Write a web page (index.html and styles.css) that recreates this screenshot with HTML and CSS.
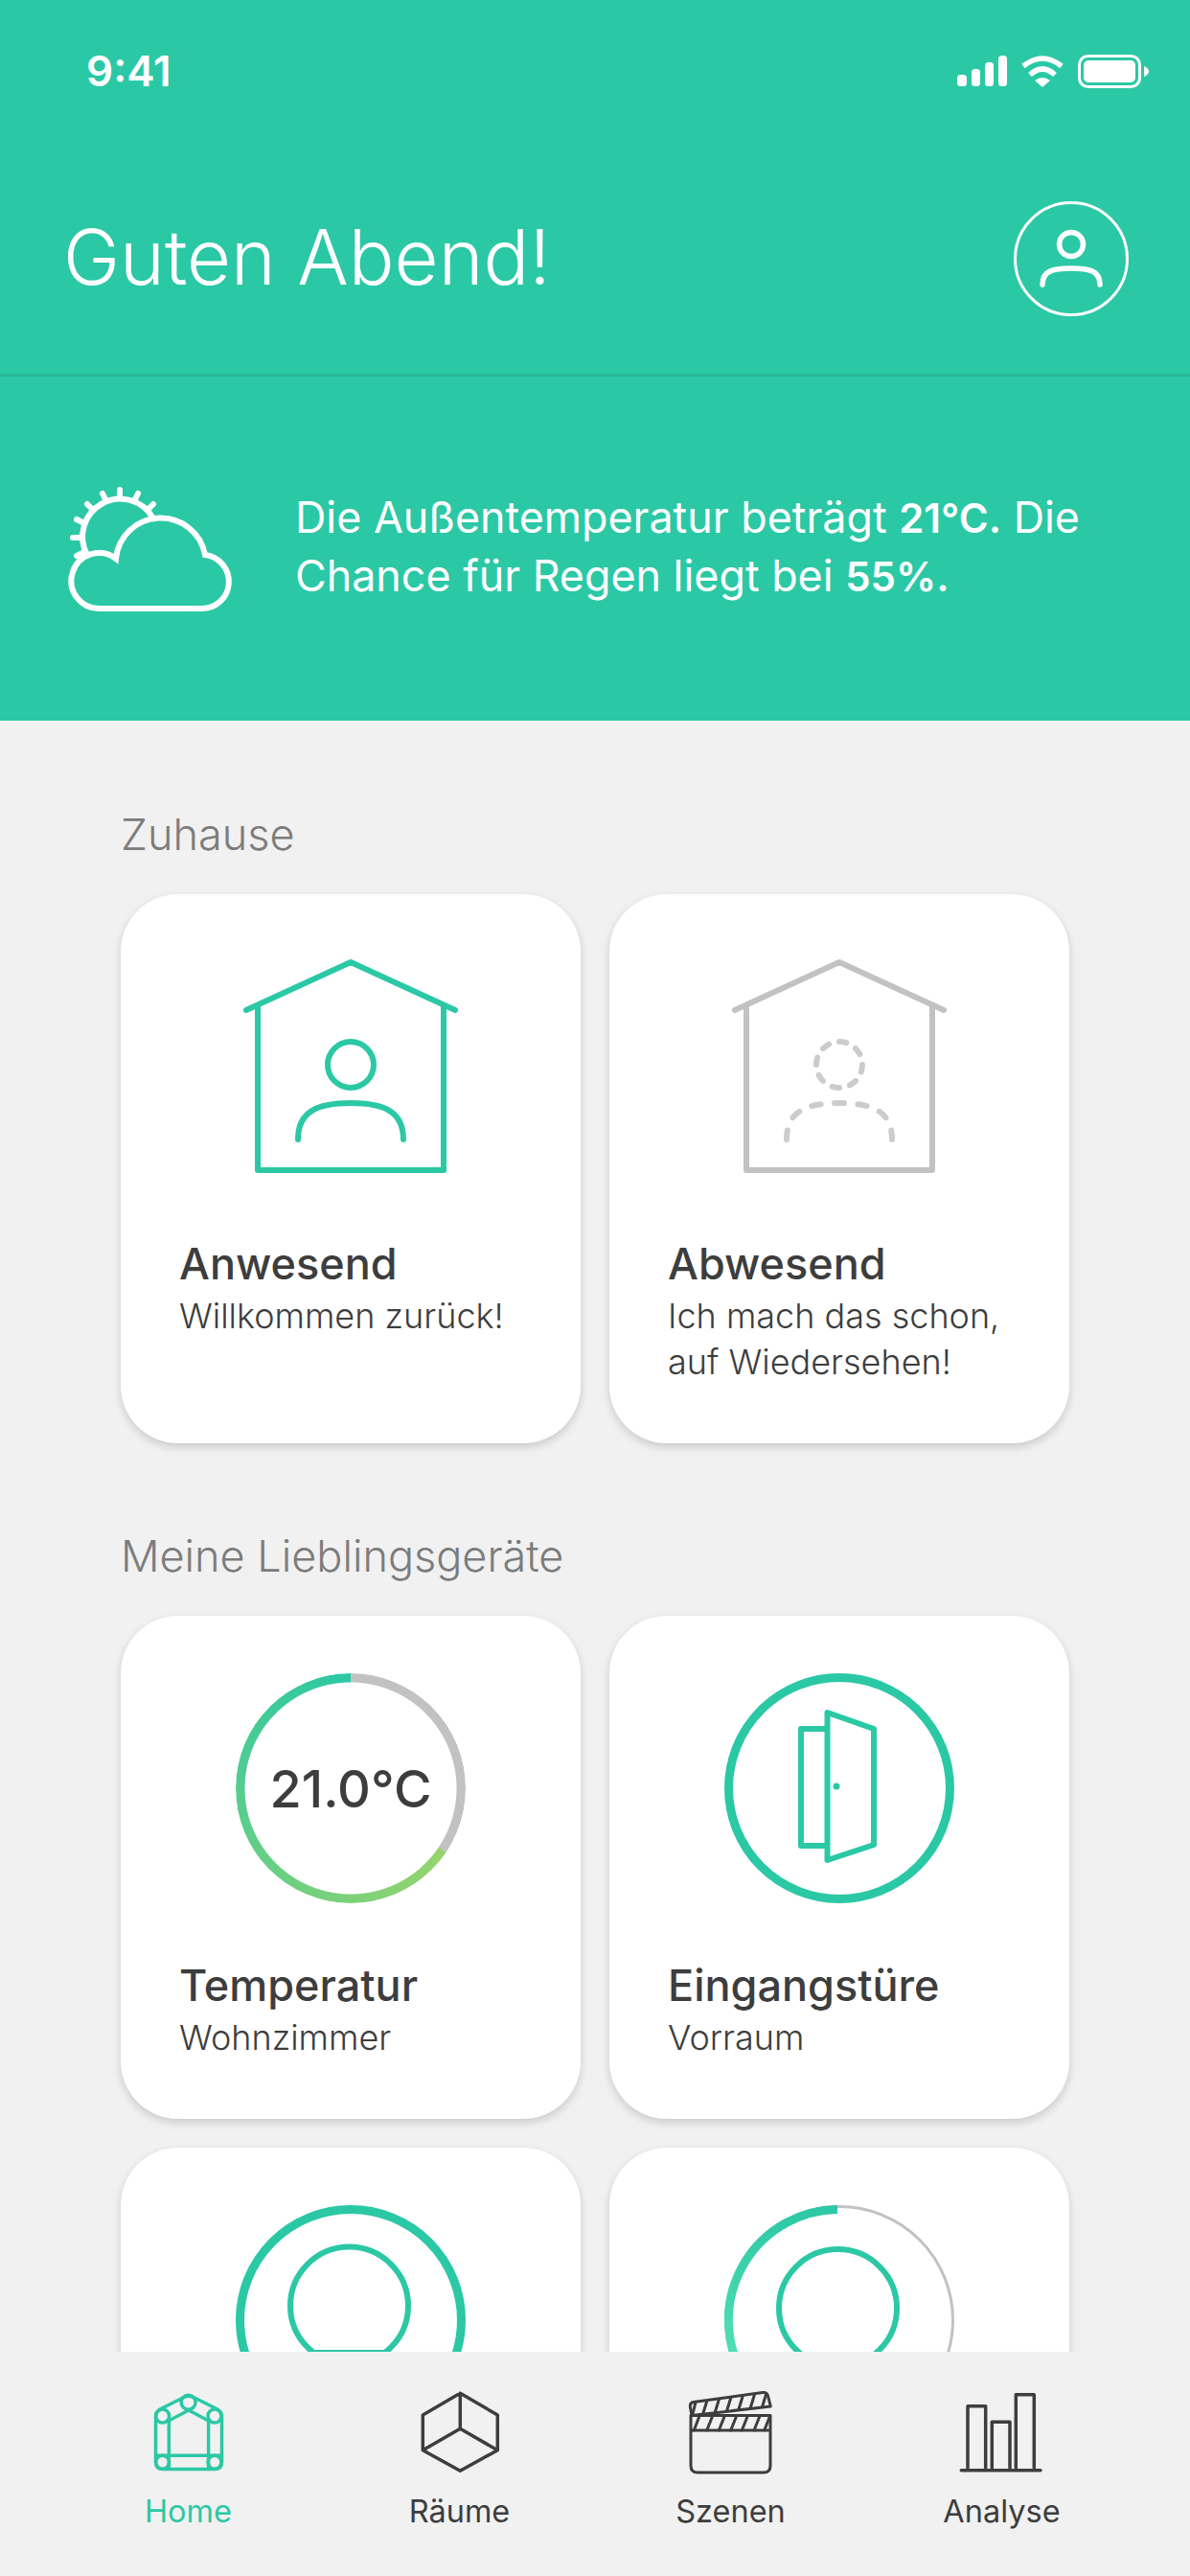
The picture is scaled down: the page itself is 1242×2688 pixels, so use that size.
FILE: index.html
```html
<!DOCTYPE html>
<html lang="de">
<head>
    <meta charset="utf-8">
    <title>Guten Abend</title>
    <link rel="stylesheet" href="styles.css">
</head>
<body>
<div class="phone">
    <header class="header">
        <div class="status">
            <span class="time">9:41</span>
            <div class="status-icons">
                <svg class="signal" width="52" height="32" viewBox="0 0 52 32">
                    <rect x="0" y="20" width="10" height="12" rx="3.5"/>
                    <rect x="15" y="14" width="9" height="18" rx="3.5"/>
                    <rect x="29" y="7" width="9" height="25" rx="3.5"/>
                    <rect x="43" y="0" width="9" height="32" rx="3.5"/>
                </svg>
                <svg class="wifi" width="46" height="33" viewBox="0 0 46 33">
                    <path class="wifi-arc" d="M3 11Q23 -5 43 11"/>
                    <path class="wifi-arc" d="M10 20Q23 8 36 20"/>
                    <path d="M23 33L15 26Q23 20 31 26Z"/>
                </svg>
                <svg class="battery" width="74" height="35" viewBox="0 0 74 35">
                    <rect class="battery-shell" x="1.5" y="1.5" width="63" height="32" rx="9"/>
                    <rect x="6" y="6" width="54" height="23" rx="5"/>
                    <path d="M69 12C72 13 74 15 74 17.500C74 20 72 22 69 23Z"/>
                </svg>
            </div>
        </div>
        <div class="greeting">
            <h1>Guten Abend!</h1>
            <svg class="avatar" width="120" height="120" viewBox="0 0 120 120">
                <circle class="avatar-ring" cx="60" cy="60" r="58.500"/>
                <circle cx="60" cy="45" r="12.500"/>
                <path d="M30 87C30 72 42 70 60 70C78 70 90 72 90 87"/>
            </svg>
        </div>
        <div class="weather">
            <svg class="weather-icon" width="220" height="180" viewBox="0 0 220 180">
                <path d="M55 154H160A28.100 28.100 0 0 0 164 98A47 47 0 0 0 71 102A29 29 0 1 0 55 154Z"/>
                <path d="M41 98A39 39 0 0 1 110 60"/>
                <path d="M75 30V37M57 34L60 40M94 34L91 40M41 45L46 50M110 45L105 50M30 61L36 64M26 80H33M30 99L36 96"/>
            </svg>
            <p>Die Außentemperatur beträgt <b>21°C.</b> Die<br>Chance für Regen liegt bei <b>55%.</b></p>
        </div>
    </header>

    <main class="content">
        <h2>Zuhause</h2>
        <div class="cards">
            <div class="card">
                <svg class="icon house" width="240" height="240" viewBox="0 0 240 240">
                    <path d="M11 61L120 11L229 61M23 56V228H217V56"/>
                    <circle cx="120" cy="118" r="24"/>
                    <path d="M65 196C65 167 85 158 120 158C155 158 175 167 175 196"/>
                </svg>
                <h3>Anwesend</h3>
                <p>Willkommen zurück!</p>
            </div>
            <div class="card">
                <svg class="icon house house-off" width="240" height="240" viewBox="0 0 240 240">
                    <path d="M11 61L120 11L229 61M23 56V228H217V56"/>
                    <circle class="dashed" cx="120" cy="118" r="24" pathLength="160" stroke-dasharray="8 12"/>
                    <path class="dashed" d="M65 196C65 167 85 158 120 158C155 158 175 167 175 196" pathLength="130" stroke-dasharray="8 12.330"/>
                </svg>
                <h3>Abwesend</h3>
                <p>Ich mach das schon,<br>auf Wiedersehen!</p>
            </div>
        </div>

        <h2>Meine Lieblingsgeräte</h2>
        <div class="cards">
            <div class="card">
                <div class="icon gauge">21.0°C</div>
                <h3>Temperatur</h3>
                <p>Wohnzimmer</p>
            </div>
            <div class="card">
                <svg class="icon device" width="240" height="240" viewBox="0 0 240 240">
                    <circle class="ring" cx="120" cy="120" r="115.500"/>
                    <path d="M107.500 41L156 58V179L107.500 195Z"/>
                    <path d="M107 58H80V180H107"/>
                    <circle class="knob" cx="117" cy="118" r="3.500"/>
                </svg>
                <h3>Eingangstüre</h3>
                <p>Vorraum</p>
            </div>
            <div class="card">
                <svg class="icon device" width="240" height="240" viewBox="0 0 240 240">
                    <circle class="ring" cx="120" cy="120" r="115.500"/>
                    <circle cx="118.500" cy="105" r="61.500"/>
                    <path d="M82 154H155"/>
                </svg>
            </div>
            <div class="card">
                <svg class="icon device" width="240" height="240" viewBox="0 0 240 240">
                    <defs>
                        <linearGradient id="fade" gradientUnits="userSpaceOnUse" x1="0" y1="0" x2="0" y2="160">
                            <stop offset="0" stop-color="#2bc8a5"/>
                            <stop offset="1" stop-color="#52e0b4"/>
                        </linearGradient>
                    </defs>
                    <circle class="ring-off" cx="120" cy="120" r="118.500"/>
                    <path class="ring" stroke="url(#fade)" d="M118 4.500A115.500 115.500 0 0 0 20 178"/>
                    <circle cx="118.500" cy="107.500" r="61.500"/>
                </svg>
            </div>
        </div>
    </main>

    <nav class="tabs">
        <div class="tab active">
            <svg width="90" height="90" viewBox="0 0 90 90">
                <path d="M38 9.500Q45 5 52 9.500L75 21Q79.500 24 79.500 29V76Q79.500 83.500 72 83.500H18Q10.500 83.500 10.500 76V29Q10.500 24 15 21Z"/>
                <circle cx="44.600" cy="13.700" r="7.500"/>
                <circle cx="17.600" cy="28" r="7"/>
                <circle cx="72" cy="28" r="7"/>
                <circle cx="17.600" cy="76.300" r="7"/>
                <circle cx="72" cy="76.300" r="7"/>
                <path d="M24 33L45 22L65.500 33M24.300 33V83M65.600 33V83M11 69.300H79"/>
            </svg>
            <span>Home</span>
        </div>
        <div class="tab">
            <svg width="90" height="90" viewBox="0 0 90 90">
                <path d="M45.300 4.300L84.300 27V63.700L45.300 85.300L6.300 63.700V27ZM45.300 4.300V41.300M6.300 63.700L45.300 41.300L84.300 63.700"/>
            </svg>
            <span>Räume</span>
        </div>
        <div class="tab">
            <svg class="thin" width="90" height="90" viewBox="0 0 90 90">
                <path d="M3 27.500H86V80Q86 87 79 87H10Q3 87 3 80ZM3 43H86"/>
                <path d="M4 27.500L2.300 18Q2 14 6 13.500L78 3.500Q82.500 3 83.500 7L86.300 18Z"/>
                <path d="M6.300 43L12 28M19.700 43L25.700 28M32.300 43L38.300 28M44.700 43L50.700 28M56.300 43L62.300 28M69 43L75 28M79.700 43L85.700 28"/>
                <path d="M4.700 27L8 13.700M15.700 25.700L19.700 12.700M28.300 24L32.300 11M40.700 22.300L44.700 9.300M53 21L57 8M65.300 19.300L69.300 6.300M77.700 18L81.700 5"/>
            </svg>
            <span>Szenen</span>
        </div>
        <div class="tab">
            <svg width="90" height="90" viewBox="0 0 90 90">
                <path d="M9 82V17.700H27.700V82M34.300 82V34.300H53V82M59.300 82V5.700H78.300V82M2.300 84.700H85"/>
            </svg>
            <span>Analyse</span>
        </div>
    </nav>
</div>
</body>
</html>
```
FILE: styles.css
```css
html, body {
    margin: 0;
    padding: 0;
}
body {
    font-family: Inter, "Liberation Sans", sans-serif;
    color: #3d3d3d;
    background: #f1f1f1;
}
h1, h2, h3, p {
    margin: 0;
    font-weight: normal;
}
svg {
    display: block;
    fill: none;
}
.phone {
    width: 1242px;
    height: 2688px;
    display: flex;
    flex-direction: column;
    overflow: hidden;
}

/* green top part */
.header {
    background: #2bc8a5;
    color: white;
    flex-shrink: 0;
}
.status {
    height: 150px;
    box-sizing: border-box;
    padding: 50px 43px 0 90px;
    display: flex;
    justify-content: space-between;
}
.time {
    font-size: 44px;
    line-height: 48px;
    font-weight: 600;
}
.status-icons {
    display: flex;
    gap: 14px;
    height: 48px;
    align-items: center;
}
.signal, .wifi path, .battery rect, .battery path {
    fill: white;
}
.wifi .wifi-arc {
    fill: none;
    stroke: white;
    stroke-width: 5.500px;
}
.battery .battery-shell {
    fill: none;
    stroke: white;
    stroke-width: 3px;
}
.greeting {
    padding: 60px 64px 60px 66px;
    display: flex;
    justify-content: space-between;
    align-items: center;
    border-bottom: 3px solid #26b898;
}
h1 {
    font-size: 79.500px;
    font-weight: 300;
    line-height: 116px;
    padding-bottom: 4px;
}
.avatar {
    stroke: white;
    stroke-width: 5.500px;
    stroke-linecap: round;
}
.avatar .avatar-ring {
    stroke-width: 3px;
}
.weather {
    height: 359px;
    box-sizing: border-box;
    padding: 0 0 4px 50px;
    display: flex;
    align-items: center;
    gap: 38px;
    font-size: 44.800px;
    line-height: 60px;
    font-weight: 300;
}
.weather b {
    font-size: 42px;
    font-weight: 600;
}
.weather-icon {
    stroke: white;
    stroke-width: 6px;
    stroke-linecap: round;
}

/* cards */
.content {
    flex: 1;
    min-height: 0;
    overflow: hidden;
    padding: 89px 126px 0;
}
h2 {
    font-size: 45px;
    line-height: 60px;
    font-weight: 300;
    color: #7c7c7c;
    margin-bottom: 32px;
}
.cards + h2 {
    margin-top: 88px;
    margin-bottom: 32px;
}
.cards {
    display: grid;
    grid-template-columns: 480px 480px;
    gap: 30px;
}
.card {
    background: white;
    border-radius: 60px;
    box-shadow: 0 4px 10px rgba(0, 0, 0, 0.16);
    box-sizing: border-box;
    min-height: 525px;
    padding: 60px 40px 61px 61px;
}
.icon {
    margin: 0 0 0 59px;
    width: 240px;
    height: 240px;
}
.card h3 {
    margin-top: 57px;
    font-size: 45px;
    line-height: 58px;
    font-weight: 500;
}
.card p {
    margin-top: 1px;
    font-size: 36px;
    line-height: 48px;
    font-weight: 300;
}
.house {
    stroke: #2bc8a5;
    stroke-width: 6px;
    stroke-linecap: round;
    stroke-linejoin: round;
}
.house-off {
    stroke: #c2c2c2;
}
.dashed {
    stroke: #cccccc;
}
.device {
    stroke: #2bc8a5;
    stroke-width: 6px;
    stroke-linejoin: round;
}
.device .ring {
    stroke-width: 9px;
}
.device .ring-off {
    stroke: #c2c2c2;
    stroke-width: 3px;
}
.device .knob {
    fill: #2bc8a5;
    stroke: none;
}
.gauge {
    position: relative;
    display: flex;
    align-items: center;
    justify-content: center;
    font-size: 54px;
    font-weight: 500;
}
.gauge::before {
    content: "";
    position: absolute;
    inset: 0;
    border-radius: 50%;
    background: conic-gradient(#c2c2c2 0 124deg, #96d46c 124deg, #2bc8a5 360deg);
    -webkit-mask: radial-gradient(closest-side, transparent calc(100% - 10px), black calc(100% - 9px));
    mask: radial-gradient(closest-side, transparent calc(100% - 10px), black calc(100% - 9px));
}

/* bottom bar */
.tabs {
    height: 234px;
    flex-shrink: 0;
    box-sizing: border-box;
    padding: 39px 55px 0;
    background: #f1f1f1;
    position: relative;
    display: grid;
    grid-template-columns: repeat(4, 1fr);
}
.tab {
    display: flex;
    flex-direction: column;
    align-items: center;
    font-size: 32.500px;
    line-height: 40px;
    color: #3d3d3d;
}
.tab svg {
    stroke: #3d3d3d;
    stroke-width: 3.500px;
    stroke-linecap: round;
    stroke-linejoin: round;
    margin-bottom: 18px;
}
.tab svg.thin {
    stroke-width: 3px;
}
.tab.active {
    color: #2bc8a5;
}
.tab.active svg {
    stroke: #2bc8a5;
}
```
